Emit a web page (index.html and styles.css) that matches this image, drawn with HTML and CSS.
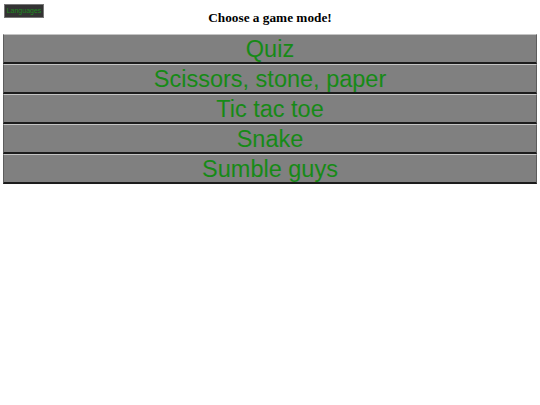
FILE: index.html
```html
<!DOCTYPE html>
<html>
<head>
<meta charset="utf-8">
<link rel="stylesheet" href="styles.css">
</head>
<body>
<header class="top">
  <button class="lang">Languages</button>
  <h5 class="title">Choose a game mode!</h5>
</header>
<nav class="modes">
  <button class="mode">Quiz</button>
  <button class="mode">Scissors, stone, paper</button>
  <button class="mode">Tic tac toe</button>
  <button class="mode">Snake</button>
  <button class="mode">Sumble guys</button>
</nav>
</body>
</html>
```
FILE: styles.css
```css
html, body {
  margin: 0;
  padding: 0;
  background: #ffffff;
}
.top {
  position: relative;
  height: 34px;
}
.lang {
  position: absolute;
  left: 4px;
  top: 4px;
  width: 40px;
  height: 14px;
  padding: 0;
  margin: 0;
  background: #333333;
  color: #1f8a1f;
  border: 1px solid #777777;
  font-family: "Liberation Sans", Arial, sans-serif;
  font-size: 7px;
  line-height: 12px;
}
.title {
  margin: 0;
  padding-top: 10px;
  text-align: center;
  font-family: "Liberation Serif", "Times New Roman", serif;
  font-weight: bold;
  font-size: 13.28px;
  line-height: 15px;
  color: #000000;
}
.modes {
  display: flex;
  flex-direction: column;
  padding: 0 3px;
}
.mode {
  display: block;
  width: 100%;
  height: 30px;
  margin: 0;
  padding: 0;
  background: #808080;
  color: #168a16;
  font-family: "Liberation Sans", Arial, sans-serif;
  font-size: 23.5px;
  line-height: 26px;
  border-style: solid;
  border-width: 1px 1px 2px 1px;
  border-color: #c4c4c4 #5e5e5e #1c1c1c #5e5e5e;
}
```
